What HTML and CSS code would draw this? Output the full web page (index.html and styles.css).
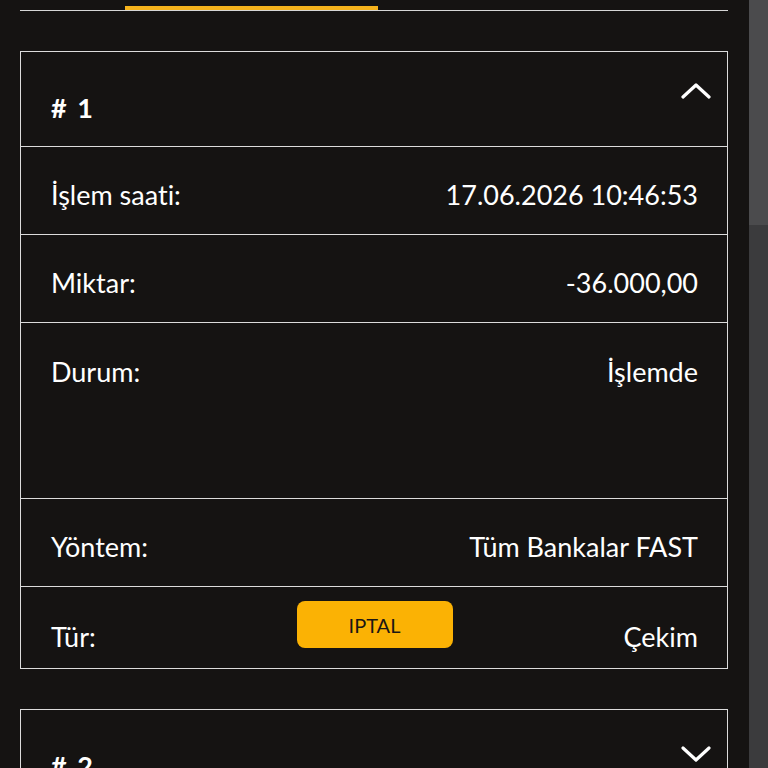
FILE: index.html
```html
<!DOCTYPE html>
<html lang="tr">
  <head>
    <meta charset="UTF-8" />
    <meta name="viewport" content="width=device-width, initial-scale=1.0" />
    <title>İşlem Geçmişi</title>
    <link rel="stylesheet" href="styles.css">
  </head>
  <body>
    <div class="screen">
      <main class="content">
        <div class="tabs">
          <span class="tab-active"></span>
        </div>

        <section class="card">
          <header class="card-head">
            <h2># 1</h2>
            <svg class="chevron" viewBox="0 0 30 16" width="30" height="16">
              <polyline points="2,14 15,2 28,14" />
            </svg>
          </header>
          <div class="row">
            <span>İşlem saati:</span>
            <span>17.06.2026 10:46:53</span>
          </div>
          <div class="row">
            <span>Miktar:</span>
            <span>-36.000,00</span>
          </div>
          <div class="row row-tall">
            <span>Durum:</span>
            <span>İşlemde</span>
          </div>
          <div class="row">
            <span>Yöntem:</span>
            <span>Tüm Bankalar FAST</span>
          </div>
          <div class="row row-action">
            <span>Tür:</span>
            <button type="button" class="cancel">IPTAL</button>
            <span class="value">Çekim</span>
          </div>
        </section>

        <section class="card">
          <header class="card-head">
            <h2># 2</h2>
            <svg class="chevron chevron-down" viewBox="0 0 30 16" width="30" height="16">
              <polyline points="2,2 15,14 28,2" />
            </svg>
          </header>
        </section>
      </main>
      <div class="scrollbar"><div class="thumb"></div></div>
    </div>
  </body>
</html>
```

FILE: styles.css
```css
html,
body {
  margin: 0;
  height: 100%;
  overflow: hidden;
}
body {
  font-family: "Lato", "Noto Sans", sans-serif;
  font-variant-ligatures: none;
  background: #151312;
  color: #fff;
}
.screen {
  display: flex;
  height: 100%;
}
.content {
  flex: 1;
  padding: 0 21px 0 20px;
}
.scrollbar {
  width: 19px;
  background: #3b3b3d;
}
.thumb {
  height: 225px;
  background: #4b4b4d;
}

.tabs {
  height: 10px;
  border-bottom: 1px solid #d6d6d6;
  padding-left: 105px;
  display: flex;
  align-items: flex-end;
}
.tab-active {
  width: 253px;
  height: 4px;
  background: #f6b31c;
}

.card {
  margin-top: 40px;
  border: 1px solid #dcdcdc;
}
.card-head {
  height: 94px;
  display: flex;
  justify-content: space-between;
  align-items: flex-start;
  padding: 0 16px 0 30px;
}
.card-head h2 {
  margin: 41px 0 0;
  font-size: 27px;
  font-weight: 700;
  line-height: 30px;
  word-spacing: 4px;
}
.chevron {
  margin-top: 31px;
  fill: none;
  stroke: #fff;
  stroke-width: 3.2;
  stroke-linecap: round;
  stroke-linejoin: round;
}
.chevron-down {
  margin-top: 36px;
}

.row {
  border-top: 1px solid #dcdcdc;
  height: 88px;
  padding: 8px 29px 0 30px;
  box-sizing: border-box;
  display: flex;
  justify-content: space-between;
  align-items: center;
  font-size: 27px;
}
.row-tall {
  height: 176px;
  align-items: flex-start;
  padding-top: 33px;
  line-height: 32px;
}
.row-action {
  height: 82px;
  padding-top: 0;
  display: grid;
  grid-template-columns: 1fr auto 1fr;
  align-items: start;
}
.row-action span {
  margin-top: 34px;
  line-height: 32px;
}
.row-action .value {
  text-align: right;
}
.cancel {
  margin-top: 14px;
  width: 156px;
  height: 47px;
  border: none;
  border-radius: 8px;
  background: #fbb204;
  color: #1b1714;
  font-family: inherit;
  font-size: 20px;
  cursor: pointer;
}
```
